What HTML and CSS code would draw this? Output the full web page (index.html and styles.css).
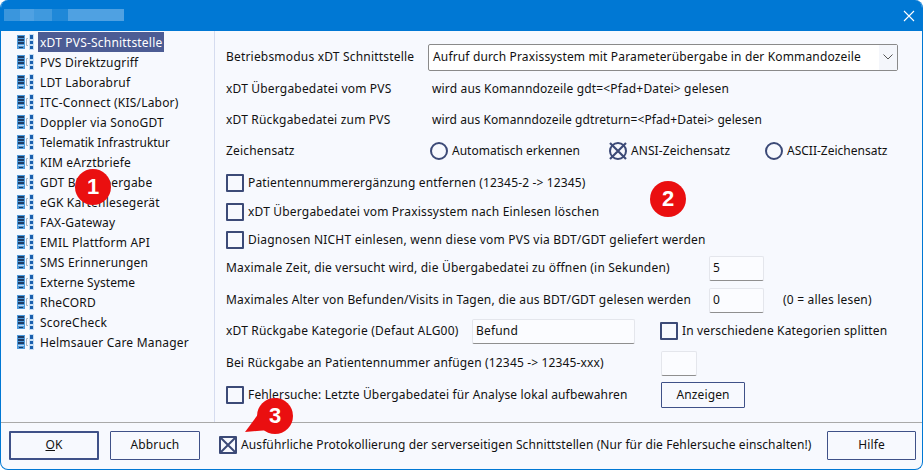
FILE: index.html
```html
<!DOCTYPE html>
<html lang="de">
<head>
<meta charset="utf-8">
<title>Einstellungen</title>
<link rel="stylesheet" href="styles.css">
</head>
<body>
<svg class="defs" width="0" height="0">
  <symbol id="srv" viewBox="0 0 17 16">
    <rect x="0" y="1" width="8" height="14" fill="#4f9bdc"/>
    <rect x="1" y="2" width="6" height="2" fill="#1d3b66"/>
    <rect x="1" y="5" width="6" height="2" fill="#1d3b66"/>
    <rect x="1" y="8" width="6" height="2" fill="#1d3b66"/>
    <rect x="1" y="11" width="6" height="1" fill="#bcd9f2"/>
    <rect x="2" y="13" width="4" height="1" fill="#1d3b66"/>
    <path d="M11 4.500H9.500V11.500H11" fill="none" stroke="#a8b4c2"/>
    <rect x="12" y="0" width="5" height="16" fill="#c6def4"/>
    <rect x="13" y="1" width="3" height="4" fill="#1a5fae"/>
    <rect x="13" y="7" width="3" height="3" fill="#1a5fae"/>
    <rect x="13" y="12" width="3" height="3" fill="#1a5fae"/>
  </symbol>
</svg>
<div class="window">
  <header class="titlebar">
    <div class="blur"><i class="b1"></i><i class="b2"></i><i class="b3"></i><i class="b4"></i><i class="b5"></i></div>
    <svg class="close" width="12" height="12" viewBox="0 0 12 12"><path d="M1 1L11 11M11 1L1 11" stroke="#fff" stroke-width="1.100" fill="none"/></svg>
  </header>
  <div class="main">
    <nav class="tree">
      <div class="item"><svg class="ic"><use href="#srv"/></svg><span class="sel">xDT PVS-Schnittstelle</span></div>
      <div class="item"><svg class="ic"><use href="#srv"/></svg><span>PVS Direktzugriff</span></div>
      <div class="item"><svg class="ic"><use href="#srv"/></svg><span>LDT Laborabruf</span></div>
      <div class="item"><svg class="ic"><use href="#srv"/></svg><span>ITC-Connect (KIS/Labor)</span></div>
      <div class="item"><svg class="ic"><use href="#srv"/></svg><span>Doppler via SonoGDT</span></div>
      <div class="item"><svg class="ic"><use href="#srv"/></svg><span class="ls-0">Telematik Infrastruktur</span></div>
      <div class="item"><svg class="ic"><use href="#srv"/></svg><span>KIM eArztbriefe</span></div>
      <div class="item"><svg class="ic"><use href="#srv"/></svg><span>GDT BDT-Übergabe</span></div>
      <div class="item"><svg class="ic"><use href="#srv"/></svg><span>eGK Kartenlesegerät</span></div>
      <div class="item"><svg class="ic"><use href="#srv"/></svg><span>FAX-Gateway</span></div>
      <div class="item"><svg class="ic"><use href="#srv"/></svg><span>EMIL Plattform API</span></div>
      <div class="item"><svg class="ic"><use href="#srv"/></svg><span>SMS Erinnerungen</span></div>
      <div class="item"><svg class="ic"><use href="#srv"/></svg><span class="ls-1">Externe Systeme</span></div>
      <div class="item"><svg class="ic"><use href="#srv"/></svg><span>RheCORD</span></div>
      <div class="item"><svg class="ic"><use href="#srv"/></svg><span>ScoreCheck</span></div>
      <div class="item"><svg class="ic"><use href="#srv"/></svg><span>Helmsauer Care Manager</span></div>
    </nav>
    <section class="form">
      <div class="row r-mode">
        <label class="lab">Betriebsmodus xDT Schnittstelle</label>
        <div class="select"><span class="select-text ls-2">Aufruf durch Praxissystem mit Parameterübergabe in der Kommandozeile</span><span class="arrow"><svg width="10" height="6" viewBox="0 0 10 6"><path d="M.5.500L5 5L9.500.500" fill="none" stroke="#555"/></svg></span></div>
      </div>
      <div class="row r-31">
        <label class="lab lab-w">xDT Übergabedatei vom PVS</label>
        <span class="ls-2">wird aus Komanndozeile gdt=&lt;Pfad+Datei&gt; gelesen</span>
      </div>
      <div class="row r-31">
        <label class="lab lab-w">xDT Rückgabedatei zum PVS</label>
        <span class="ls-1">wird aus Komanndozeile gdtreturn=&lt;Pfad+Datei&gt; gelesen</span>
      </div>
      <div class="row r-31">
        <label class="lab lab-z">Zeichensatz</label>
        <span class="radio r1 ls-0"><i class="circle"></i>Automatisch erkennen</span>
        <span class="radio r2 ls-1"><i class="circle crossed"><svg width="18" height="18" viewBox="0 0 18 18"><path d="M1 1L17 17M17 1L1 17" stroke="#3c4a77" stroke-width="2.200" fill="none"/></svg></i>ANSI-Zeichensatz</span>
        <span class="radio r3 ls-0"><i class="circle"></i>ASCII-Zeichensatz</span>
      </div>
      <div class="row m5"><i class="box"></i><span class="ls-2">Patientennummerergänzung entfernen (12345-2 -&gt; 12345)</span></div>
      <div class="row m5"><i class="box"></i><span>xDT Übergabedatei vom Praxissystem nach Einlesen löschen</span></div>
      <div class="row m4"><i class="box"></i><span class="ls-3">Diagnosen NICHT einlesen, wenn diese vom PVS via BDT/GDT geliefert werden</span></div>
      <div class="row m4">
        <label class="lab lab-long">Maximale Zeit, die versucht wird, die Übergabedatei zu öffnen (in Sekunden)</label>
        <div class="input num">5</div>
      </div>
      <div class="row m8">
        <label class="lab lab-long">Maximales Alter von Befunden/Visits in Tagen, die aus BDT/GDT gelesen werden</label>
        <div class="input num">0</div>
        <span class="hint">(0 = alles lesen)</span>
      </div>
      <div class="row m7">
        <label class="lab lab-kat">xDT Rückgabe Kategorie (Defaut ALG00)</label>
        <div class="input kat">Befund</div>
        <i class="box box-kat"></i><span class="ls-2">In verschiedene Kategorien splitten</span>
      </div>
      <div class="row m8">
        <label class="lab lab-bei ls-2">Bei Rückgabe an Patientennummer anfügen (12345 -&gt; 12345-xxx)</label>
        <div class="input tiny"></div>
      </div>
      <div class="row m8">
        <i class="box"></i><span class="lab-fehler ls-2">Fehlersuche: Letzte Übergabedatei für Analyse lokal aufbewahren</span>
        <button class="btn anz">Anzeigen</button>
      </div>
    </section>
  </div>
  <footer class="footer">
    <button class="btn ok"><u>O</u>K</button>
    <button class="btn abb">Abbruch</button>
    <i class="box checked"><svg width="14" height="14" viewBox="0 0 14 14"><path d="M0 0L14 14M14 0L0 14" stroke="#3c4a77" stroke-width="2" fill="none"/></svg></i>
    <span class="prot">Ausführliche Protokollierung der serverseitigen Schnittstellen (Nur für die Fehlersuche einschalten!)</span>
    <button class="btn hilfe">Hilfe</button>
  </footer>
  <div class="badge b-1">1</div>
  <div class="badge b-2">2</div>
  <svg class="tail" width="40" height="30" viewBox="0 0 40 30"><path d="M0 27L20 0L36 24Z" fill="#ea0f10"/></svg>
  <div class="badge b-3">3</div>
</div>
</body>
</html>
```
FILE: styles.css
```css
* { box-sizing: border-box; }
html, body { margin: 0; padding: 0; background: #fff; }
body { width: 923px; height: 470px; overflow: hidden; font: 12px/16px "Noto Sans", sans-serif; color: #111; }
.defs { position: absolute; }
.window { position: relative; width: 923px; height: 470px; display: flex; flex-direction: column; background: #f7f9fe; border: 1px solid #0078d4; border-top: 0; border-radius: 8px; overflow: hidden; }
.titlebar { height: 31px; flex: none; background: #0078d4; display: flex; align-items: center; justify-content: space-between; padding: 0 7px 0 3px; }
.blur { display: flex; width: 120px; height: 12px; margin-top: -2px; }
.blur i { display: block; height: 12px; }
.b1 { width: 16px; background: #3a96dd; }
.b2 { width: 14px; background: #4fa1e2; }
.b3 { width: 18px; background: #3f99de; }
.b4 { width: 16px; background: #1f88d8; }
.b5 { width: 56px; background: #4fa1e2; }
.main { flex: 1; display: flex; min-height: 0; border-bottom: 1px solid #a9a9a9; }
.tree { width: 214px; flex: none; padding: 1px 0 0 16px; border-right: 1px solid #d5dcef; }
.item { height: 20px; display: flex; align-items: center; white-space: nowrap; letter-spacing: .2px; }
.ic { width: 17px; height: 16px; flex: none; margin-right: 4px; }
.item span { padding: 0 2px; line-height: 21px; height: 20px; }
.sel { background: #4c5c94; color: #fff; }
.form { flex: 1; padding: 10px 0 0 11px; min-width: 0; letter-spacing: .19px; }
.ls-0 { letter-spacing: 0; }
.ls-1 { letter-spacing: .08px; }
.ls-2 { letter-spacing: .15px; }
.ls-3 { letter-spacing: .22px; }
.row { display: flex; align-items: center; white-space: nowrap; height: 24px; }
.r-mode { height: 32px; }
.r-31 { height: 31px; }
.m4 { margin-top: 4px; }
.m5 { margin-top: 5px; }
.m7 { margin-top: 7px; }
.m8 { margin-top: 8px; }
.lab { width: 202px; flex: none; }
.lab-w { width: 206px; }
.lab-long { width: 483px; }
.lab-kat { width: 246px; }
.lab-bei { width: 435px; }
.lab-z { width: 204px; }
.select { width: 470px; height: 27px; background: #fff; border: 1px solid #8a8a8a; border-radius: 2px; display: flex; align-items: center; justify-content: space-between; padding-left: 4px; }
.select-text { flex: 1; }
.arrow { width: 18px; height: 25px; background: #f4f6fb; display: flex; align-items: center; justify-content: center; }
.radio { display: flex; align-items: center; }
.circle { width: 18px; height: 18px; border: 2px solid #3c4a77; border-radius: 50%; margin-right: 4px; flex: none; display: block; position: relative; }
.crossed svg { position: absolute; left: -2px; top: -2px; }
.r1 { width: 179px; }
.r2 { width: 156px; }
.box { width: 18px; height: 18px; border: 2px solid #3c4a77; flex: none; display: block; margin-right: 4px; border-radius: 1px; }
.box svg { display: block; }
.input { background: #fbfcff; border: 1px solid #e4e6ec; border-bottom: 1px solid #8f8f8f; border-radius: 2px; height: 25px; padding: 2px 3px; line-height: 18px; }
.num { width: 55px; }
.hint { margin-left: 19px; }
.kat { width: 163px; }
.box-kat { margin-left: 25px; }
.tiny { width: 36px; }
.lab-fehler { width: 413px; flex: none; }
.btn { font: inherit; letter-spacing: .12px; color: #111; background: #f7f9fe; border: 1px solid #3f5188; border-radius: 1px; padding: 0; }
.anz { width: 84px; height: 26px; }
.footer { height: 46px; flex: none; display: flex; align-items: center; padding: 0 0 2px 8px; letter-spacing: .1px; }
.ok { width: 90px; height: 29px; border-width: 2px; margin-right: 11px; }
.abb { width: 90px; height: 29px; margin-right: 19px; }
.prot { width: 586px; flex: none; }
.hilfe { width: 89px; height: 29px; }
.badge { position: absolute; width: 36px; height: 36px; border-radius: 50%; background: #ea0f10; color: #fff; font: 700 22px/36px "Liberation Sans", sans-serif; text-align: center; }
.b-1 { left: 74px; top: 169px; }
.b-2 { left: 649px; top: 181px; }
.b-3 { left: 256px; top: 398px; }
.tail { position: absolute; left: 244px; top: 405px; }
```
